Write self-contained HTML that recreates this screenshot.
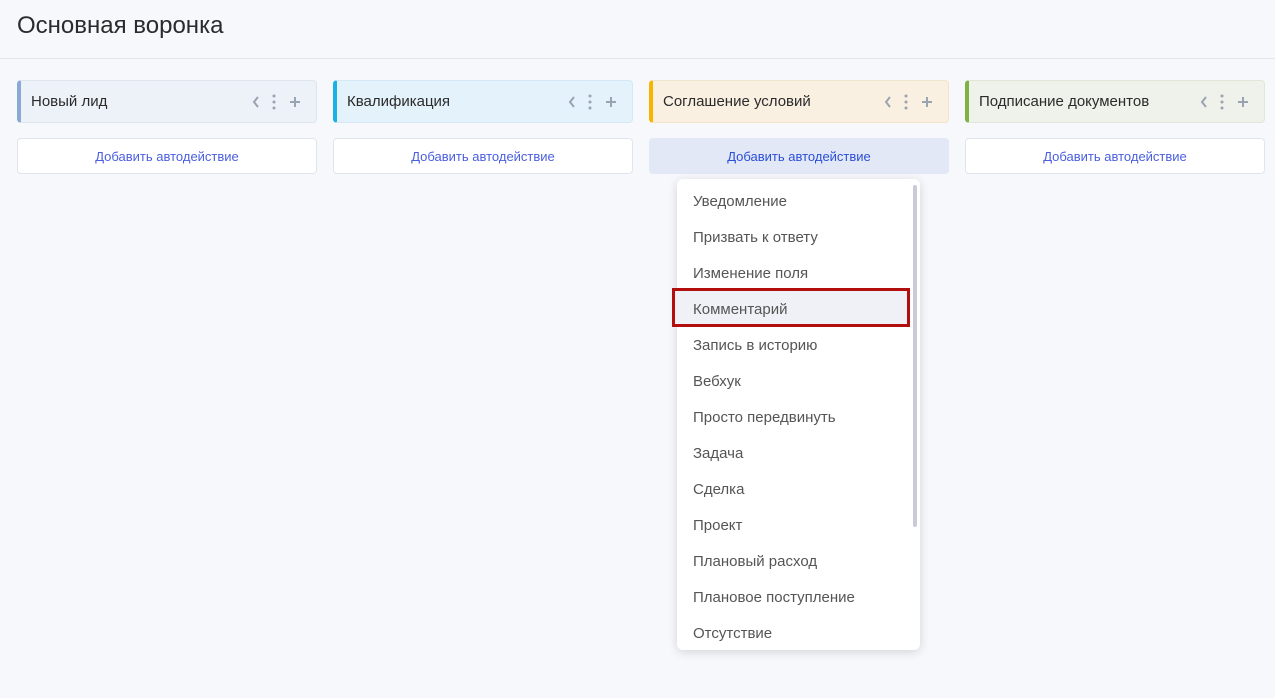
<!DOCTYPE html>
<html><head><meta charset="utf-8"><style>
*{box-sizing:border-box;margin:0;padding:0}
body{width:1275px;height:698px;background:#f7f8fc;font-family:"Liberation Sans","DejaVu Sans",sans-serif;position:relative;overflow:hidden}
.title{position:absolute;left:17px;top:12px;font-size:24px;color:#2b2b2b}
.hr{position:absolute;left:0;right:0;top:58px;height:1px;background:#e3e5ea}
.col{position:absolute;top:80px;width:300px}
.hd{height:43px;border-radius:4px;border:1px solid;border-left-width:4px;display:flex;align-items:center;padding-left:10px;font-size:15px;color:#2b2b2b;position:relative;white-space:nowrap}
.ic{position:absolute;right:10px;top:12px;display:flex;gap:6px}
.btn{margin-top:15px;height:36px;border:1px solid #e1e4ec;border-radius:4px;background:#fff;color:#4a5ee0;font-size:13px;display:flex;align-items:center;justify-content:center}
.dd{position:absolute;left:677px;top:179px;width:243px;height:471px;background:#fff;border-radius:6px;box-shadow:0 2px 10px rgba(0,0,0,.15)}
.it{position:absolute;left:16px;font-size:15px;color:#555;white-space:nowrap}
.sb{position:absolute;left:236px;top:6px;width:4px;height:342px;background:#c9ccd6;border-radius:2px}
.sel{position:absolute;left:672px;top:288px;width:238px;height:39px;border:3px solid #b20e0e;background:#f0f1f6}
</style></head><body>
<div class="title">Основная воронка</div>
<div class="hr"></div>
<div class="col" style="left:17px"><div class="hd" style="background:#edf1f8;border-color:#dfe5ef;border-left-color:#8aaad3">Новый лид<div class="ic"><svg width="60" height="18" viewBox="0 0 60 18"><path d="M12 4l-4 5 4 5" stroke="#9aa3b2" stroke-width="2" fill="none"/><circle cx="28" cy="3" r="1.5" fill="#9aa3b2"/><circle cx="28" cy="9" r="1.5" fill="#9aa3b2"/><circle cx="28" cy="15" r="1.5" fill="#9aa3b2"/><path d="M49 4v10M44 9h10" stroke="#9aa3b2" stroke-width="2"/></svg></div></div><div class="btn">Добавить автодействие</div></div>
<div class="col" style="left:333px"><div class="hd" style="background:#e3f2fb;border-color:#d3e8f4;border-left-color:#19b1e6">Квалификация<div class="ic"><svg width="60" height="18" viewBox="0 0 60 18"><path d="M12 4l-4 5 4 5" stroke="#9aa3b2" stroke-width="2" fill="none"/><circle cx="28" cy="3" r="1.5" fill="#9aa3b2"/><circle cx="28" cy="9" r="1.5" fill="#9aa3b2"/><circle cx="28" cy="15" r="1.5" fill="#9aa3b2"/><path d="M49 4v10M44 9h10" stroke="#9aa3b2" stroke-width="2"/></svg></div></div><div class="btn">Добавить автодействие</div></div>
<div class="col" style="left:649px"><div class="hd" style="background:#f9f0e1;border-color:#f0e4cc;border-left-color:#f7b500">Соглашение условий<div class="ic"><svg width="60" height="18" viewBox="0 0 60 18"><path d="M12 4l-4 5 4 5" stroke="#9aa3b2" stroke-width="2" fill="none"/><circle cx="28" cy="3" r="1.5" fill="#9aa3b2"/><circle cx="28" cy="9" r="1.5" fill="#9aa3b2"/><circle cx="28" cy="15" r="1.5" fill="#9aa3b2"/><path d="M49 4v10M44 9h10" stroke="#9aa3b2" stroke-width="2"/></svg></div></div><div class="btn" style="background:#e3e8f7;border-color:#e3e8f7;color:#2a4fd6">Добавить автодействие</div></div>
<div class="col" style="left:965px"><div class="hd" style="background:#eef2ea;border-color:#dfe8d8;border-left-color:#7cb342">Подписание документов<div class="ic"><svg width="60" height="18" viewBox="0 0 60 18"><path d="M12 4l-4 5 4 5" stroke="#9aa3b2" stroke-width="2" fill="none"/><circle cx="28" cy="3" r="1.5" fill="#9aa3b2"/><circle cx="28" cy="9" r="1.5" fill="#9aa3b2"/><circle cx="28" cy="15" r="1.5" fill="#9aa3b2"/><path d="M49 4v10M44 9h10" stroke="#9aa3b2" stroke-width="2"/></svg></div></div><div class="btn">Добавить автодействие</div></div>
<div class="dd"><div class="sb"></div></div>
<div class="sel"></div>
<div style="position:absolute;left:677px;top:0">
<div class="it" style="top:193px">Уведомление</div>
<div class="it" style="top:229px">Призвать к ответу</div>
<div class="it" style="top:265px">Изменение поля</div>
<div class="it" style="top:301px">Комментарий</div>
<div class="it" style="top:337px">Запись в историю</div>
<div class="it" style="top:373px">Вебхук</div>
<div class="it" style="top:409px">Просто передвинуть</div>
<div class="it" style="top:445px">Задача</div>
<div class="it" style="top:481px">Сделка</div>
<div class="it" style="top:517px">Проект</div>
<div class="it" style="top:553px">Плановый расход</div>
<div class="it" style="top:589px">Плановое поступление</div>
<div class="it" style="top:625px">Отсутствие</div>
</div>
</body></html>
